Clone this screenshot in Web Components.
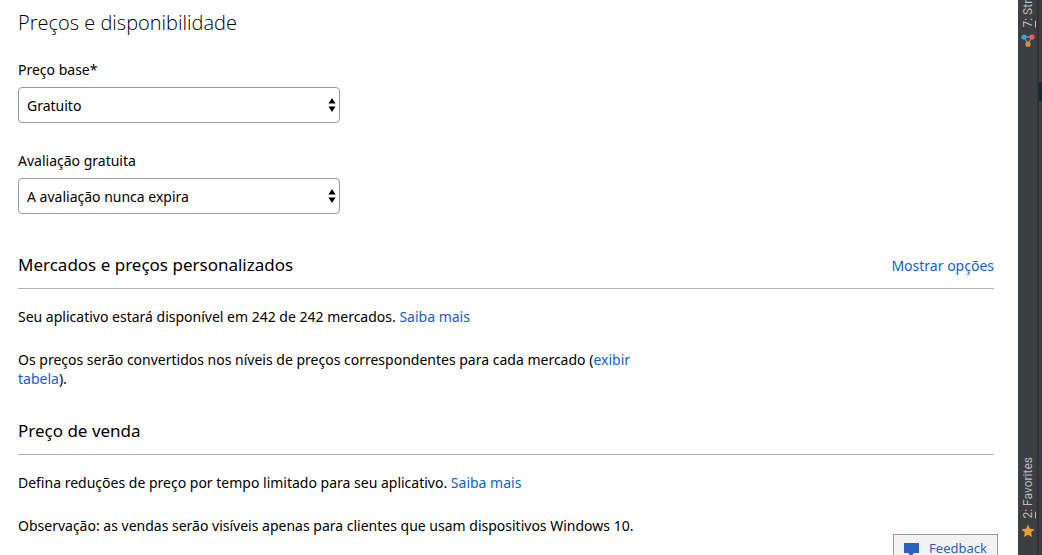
<!DOCTYPE html>
<html lang="pt-BR">
<head>
<meta charset="utf-8">
<meta name="viewport" content="width=device-width, initial-scale=1">
<title>Preços e disponibilidade</title>
<style>
  html, body { margin: 0; height: 100%; }
  body { overflow: hidden; background: #fff; color: #000; font: 14px/19px "Noto Sans", "Open Sans", sans-serif; }
</style>
</head>
<body>
<pricing-app></pricing-app>
<script>
const define = (name, html, setup) => customElements.define(name, class extends HTMLElement {
  constructor() {
    super();
    this.attachShadow({ mode: "open" }).innerHTML = html;
  }
  connectedCallback() { if (setup) setup(this, this.shadowRoot); }
});

define("text-link", `<style>
    :host { display: inline; }
    a { color: #0f5fd0; text-decoration: none; }
    a:hover { text-decoration: underline; }
  </style><a href="#"><slot></slot></a>`);

define("select-field", `
  <style>
    :host { display: block; max-width: 322px; }
    label { display: block; margin-bottom: 8px; }
    .box { display: grid; align-items: center; }
    select, svg { grid-area: 1 / 1; }
    select { appearance: none; width: 100%; height: 36px; margin: 0; padding: 0 24px 0 8px; border: 1px solid #999; border-radius: 4px; background: #fff; color: #000; font: inherit; }
    svg { justify-self: end; margin-right: 4px; pointer-events: none; }
  </style>
  <label for="field"></label>
  <div class="box">
    <select id="field"><option></option></select>
    <svg width="8" height="14" viewBox="0 0 8 14" aria-hidden="true"><path d="M4 0 7.5 5.5h-7zM4 14 .5 8.5h7z"/></svg>
  </div>`, (host, root) => {
  root.querySelector("label").textContent = host.getAttribute("label");
  root.querySelector("option").textContent = host.getAttribute("value");
});

define("page-section", `
  <style>
    :host { display: block; }
    header { display: flex; justify-content: space-between; align-items: center; height: 46px; border-bottom: 1px solid #b3b3b3; margin-bottom: 18px; }
    h2 { margin: 0; font-size: 17px; line-height: 24px; font-weight: 400; }
    .body { display: flex; flex-direction: column; gap: 24px; max-width: 630px; }
    ::slotted(p) { margin: 0; }
  </style>
  <header><h2><slot name="title"></slot></h2><slot name="action"></slot></header>
  <div class="body"><slot></slot></div>`);

define("feedback-button", `
  <style>
    :host { display: block; }
    button { display: flex; align-items: center; gap: 10px; height: 28px; padding: 0 10px; border: 1px solid #999; background: #f2f2f2; color: #2b5fc0; font: inherit; font-size: 13px; }
    svg { margin-top: 2px; }
  </style>
  <button type="button">
    <svg width="15" height="13" viewBox="0 0 15 13" aria-hidden="true"><path fill="#2b5fc0" d="M0 0h15v10h-5l-3 3-3-3H0z"/></svg>
    <span>Feedback</span>
  </button>`);

define("tool-stripe", `
  <style>
    :host { display: flex; background: #3c3f41; color: #bbb; font: 12px/14px Roboto, sans-serif; overflow: hidden; }
    nav { flex: 1; display: flex; flex-direction: column; justify-content: space-between; align-items: center; box-sizing: border-box; padding-bottom: 17px; border-right: 2px solid #2f3133; }
    button { display: flex; flex-direction: column; align-items: center; gap: 5px; padding: 0; border: 0; background: none; color: inherit; font: inherit; }
    .top { height: 47px; justify-content: flex-end; }
    .name { writing-mode: vertical-rl; rotate: 180deg; flex: none; white-space: nowrap; }
    svg { flex: none; display: block; }
    .edge { width: 3px; background: linear-gradient(#3c3f41 0 82px, #0d293e 82px 101px, #3c3f41 101px); }
  </style>
  <nav aria-label="Tool windows">
    <button class="top" type="button">
      <span class="name"><u>7</u>: Structure</span>
      <svg width="14" height="14" viewBox="0 0 14 14" aria-hidden="true">
        <path d="M3 4h8L7 11z" fill="none" stroke="#8b8f92" stroke-width="1.3"/>
        <circle cx="3" cy="4" r="2.6" fill="#4a9ddb"/><circle cx="11" cy="4" r="2.6" fill="#e8635a"/><circle cx="7" cy="11.2" r="2.6" fill="#d3923c"/>
      </svg>
    </button>
    <button type="button">
      <span class="name"><u>2</u>: Favorites</span>
      <svg width="14" height="14" viewBox="0 0 14 14" aria-hidden="true"><path fill="#e8a02e" d="M7 .5l1.9 4.3 4.7.5-3.5 3.1 1 4.7L7 10.7l-4.1 2.4 1-4.7L.4 5.3l4.7-.5z"/></svg>
    </button>
  </nav>
  <div class="edge"></div>`);

define("pricing-app", `
  <style>
    :host { display: grid; grid-template-columns: 1fr 24px; height: 100%; overflow: hidden; }
    main { padding: 8px 24px 0 18px; min-width: 0; }
    h1 { margin: 0 0 22px; font: 300 20px/30px "Open Sans", "Noto Sans", sans-serif; }
    select-field { margin-bottom: 28px; }
    page-section { margin-bottom: 20px; }
    feedback-button { position: fixed; right: 44px; bottom: -7px; }
  </style>
  <main>
    <h1>Preços e disponibilidade</h1>
    <select-field label="Preço base*" value="Gratuito"></select-field>
    <select-field label="Avaliação gratuita" value="A avaliação nunca expira"></select-field>
    <page-section>
      <span slot="title">Mercados e preços personalizados</span>
      <text-link slot="action">Mostrar opções</text-link>
      <p>Seu aplicativo estará disponível em 242 de 242 mercados. <text-link>Saiba mais</text-link></p>
      <p>Os preços serão convertidos nos níveis de preços correspondentes para cada mercado (<text-link>exibir tabela</text-link>).</p>
    </page-section>
    <page-section>
      <span slot="title">Preço de venda</span>
      <p>Defina reduções de preço por tempo limitado para seu aplicativo. <text-link>Saiba mais</text-link></p>
      <p>Observação: as vendas serão visíveis apenas para clientes que usam dispositivos Windows 10.</p>
    </page-section>
  </main>
  <tool-stripe></tool-stripe>
  <feedback-button></feedback-button>`);
</script>
</body>
</html>
